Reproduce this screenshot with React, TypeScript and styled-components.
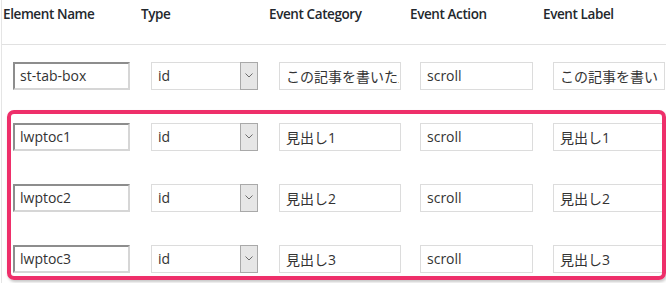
import React from "react";
import styled, { createGlobalStyle } from "styled-components";

const GlobalStyle = createGlobalStyle`
  html, body {
    margin: 0;
    padding: 0;
    background: #fff;
    overflow: hidden;
  }
  body {
    font-family: "Open Sans", "Noto Sans CJK JP", sans-serif;
    color: #32373c;
  }
`;

type Row = {
  name: string;
  category: string;
  action: string;
  label: string;
};

const rows: Row[] = [
  { name: "st-tab-box", category: "この記事を書いた人", action: "scroll", label: "この記事を書いた人" },
  { name: "lwptoc1", category: "見出し1", action: "scroll", label: "見出し1" },
  { name: "lwptoc2", category: "見出し2", action: "scroll", label: "見出し2" },
  { name: "lwptoc3", category: "見出し3", action: "scroll", label: "見出し3" },
];

const COLS = "138px 128px 141px 133px 1fr";

const Table = styled.div`
  width: 665px;
  margin-left: 1px;
  border-left: 1px solid #e5e5e5;
  padding-left: 1px;
  height: 283px;
  overflow: hidden;
`;

const HeadRow = styled.div`
  display: grid;
  grid-template-columns: ${COLS};
  height: 44px;
  border-bottom: 1px solid #e1e1e1;
  margin-left: -2px;
  padding-left: 2px;
`;

const Th = styled.div`
  font-size: 13.5px;
  font-weight: 600;
  color: #23282d;
  padding-top: 4px;
  line-height: 20px;
  letter-spacing: -0.4px;
  white-space: nowrap;
`;

// highlight drawn over the three lwptoc rows
const Group = styled.div`
  position: relative;

  &::after {
    content: "";
    position: absolute;
    top: 4px;
    left: 4px;
    right: 2px;
    bottom: 9px;
    border: 4px solid #ee2f6a;
    border-radius: 7px;
    box-shadow: 1px 2px 3px rgba(0, 0, 0, 0.22);
    pointer-events: none;
  }
`;

const BodyRow = styled.div`
  display: grid;
  grid-template-columns: ${COLS};
  height: 61px;
  align-items: center;
`;

const Cell = styled.div`
  padding-left: 10px;
  display: flex;
  align-items: center;
`;

const TextInput = styled.input<{ $w: number; $inset?: boolean; $pr?: number }>`
  box-sizing: border-box;
  width: ${(p) => p.$w}px;
  height: 28px;
  margin: 0;
  font-family: "Open Sans", "Noto Sans CJK JP", sans-serif;
  font-size: 14px;
  color: #333;
  background: #fff;
  outline: none;
  border-radius: 0;
  padding: 0 ${(p) => p.$pr ?? 1}px 0 ${(p) => (p.$inset ? 5 : 6)}px;
  border-style: solid;
  border-width: ${(p) => (p.$inset ? "2px" : "1px")};
  border-color: ${(p) =>
    p.$inset ? "#8d8d8d #d6d6d6 #d6d6d6 #8d8d8d" : "#dcdcdc"};
`;

const SelectBox = styled.div`
  box-sizing: border-box;
  width: 107px;
  height: 28px;
  display: flex;
  border: 1px solid #dcdcdc;
  background: #fff;
`;

const SelectValue = styled.span`
  flex: 1;
  display: flex;
  align-items: center;
  padding-left: 6px;
  font-size: 14px;
  color: #333;
`;

const ArrowBox = styled.span`
  box-sizing: border-box;
  width: 18px;
  margin: -1px -1px -1px 0;
  background: #e6e6e6;
  border: 1px solid #a9a9a9;
  display: flex;
  align-items: center;
  justify-content: center;
`;

const Chevron = () => (
  <svg width="8" height="5" viewBox="0 0 8 5">
    <polyline points="0.5,0.5 4,4 7.5,0.5" fill="none" stroke="#6b6b6b" strokeWidth="1" />
  </svg>
);

const DataRow = ({ row, first }: { row: Row; first?: boolean }) => (
  <BodyRow>
    <Cell>
      <TextInput $w={117} $inset readOnly value={row.name} />
    </Cell>
    <Cell>
      <SelectBox role="combobox">
        <SelectValue>id</SelectValue>
        <ArrowBox>
          <Chevron />
        </ArrowBox>
      </SelectBox>
    </Cell>
    <Cell>
      <TextInput $w={122} readOnly value={row.category} />
    </Cell>
    <Cell>
      <TextInput $w={113} readOnly value={row.action} />
    </Cell>
    <Cell>
      <TextInput $w={first ? 112 : 110} $pr={6} readOnly value={row.label} />
    </Cell>
  </BodyRow>
);

export default function App() {
  return (
    <>
      <GlobalStyle />
      <Table>
        <HeadRow>
          <Th>Element Name</Th>
          <Th>Type</Th>
          <Th>Event Category</Th>
          <Th>Event Action</Th>
          <Th>Event Label</Th>
        </HeadRow>
        <DataRow row={rows[0]} first />
        <Group>
          {rows.slice(1).map((r) => (
            <DataRow key={r.name} row={r} />
          ))}
        </Group>
      </Table>
    </>
  );
}
